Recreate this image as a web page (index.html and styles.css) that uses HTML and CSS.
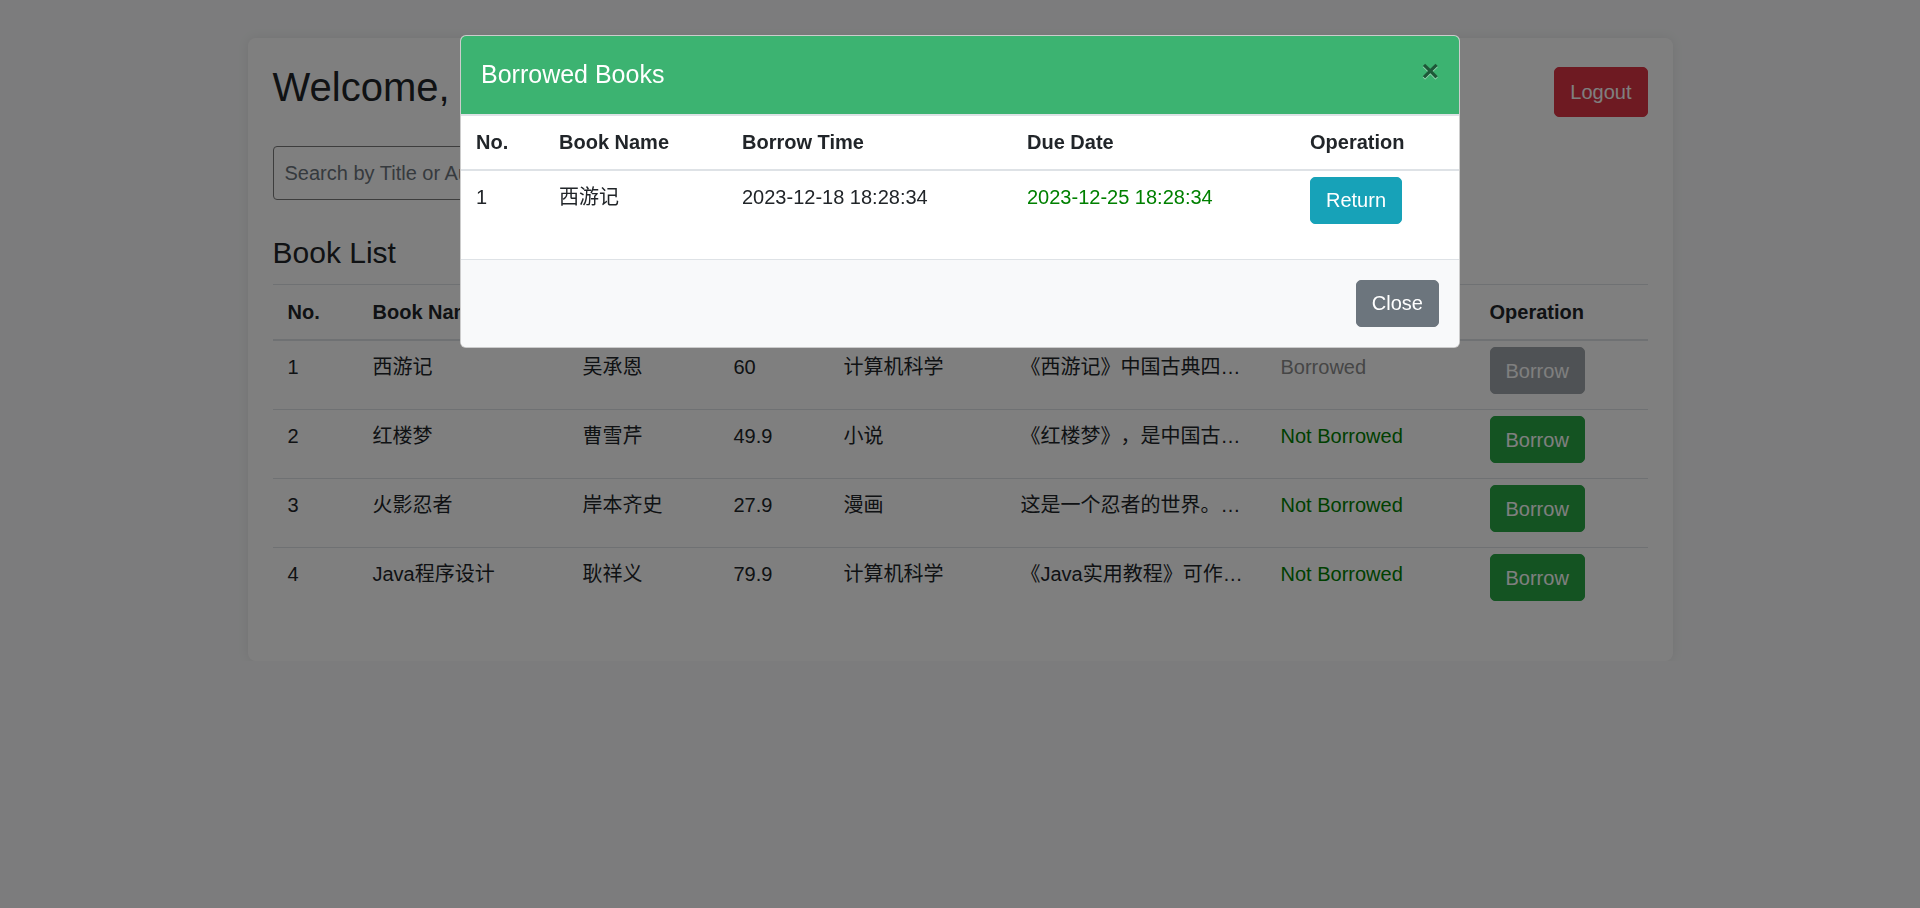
FILE: index.html
```html
<!DOCTYPE html>
<html lang="zh-CN">
<head>
<meta charset="utf-8">
<title>Library</title>
<link rel="stylesheet" href="styles.css">
</head>
<body>
<div class="container">
  <div class="top-bar">
    <h2 class="welcome">Welcome, admin</h2>
    <button class="btn btn-danger btn-logout">Logout</button>
  </div>
  <div class="search-row">
    <input class="search-input" type="text" placeholder="Search by Title or Author">
    <button class="btn btn-primary">Search</button>
  </div>
  <h4 class="list-title">Book List</h4>
  <table class="table book-table">
    <colgroup>
      <col class="c-no"><col class="c-name"><col class="c-author"><col class="c-price"><col class="c-cat"><col class="c-desc"><col class="c-status"><col class="c-op">
    </colgroup>
    <thead>
      <tr><th>No.</th><th>Book Name</th><th>Author</th><th>Price</th><th>Category</th><th>Description</th><th>Status</th><th>Operation</th></tr>
    </thead>
    <tbody>
      <tr>
        <td>1</td><td>西游记</td><td>吴承恩</td><td>60</td><td>计算机科学</td>
        <td><span class="desc-text">《西游记》中国古典四大名著之一，是由明代小说家吴承恩所著。</span></td>
        <td class="status-borrowed">Borrowed</td>
        <td class="op"><button class="btn btn-secondary" disabled>Borrow</button></td>
      </tr>
      <tr>
        <td>2</td><td>红楼梦</td><td>曹雪芹</td><td>49.9</td><td>小说</td>
        <td><span class="desc-text">《红楼梦》，是中国古代章回体长篇小说，中国古典四大名著之一。</span></td>
        <td class="status-free">Not Borrowed</td>
        <td class="op"><button class="btn btn-success">Borrow</button></td>
      </tr>
      <tr>
        <td>3</td><td>火影忍者</td><td>岸本齐史</td><td>27.9</td><td>漫画</td>
        <td><span class="desc-text">这是一个忍者的世界。漩涡鸣人是木叶隐村的忍者。</span></td>
        <td class="status-free">Not Borrowed</td>
        <td class="op"><button class="btn btn-success">Borrow</button></td>
      </tr>
      <tr>
        <td>4</td><td>Java程序设计</td><td>耿祥义</td><td>79.9</td><td>计算机科学</td>
        <td><span class="desc-text">《Java实用教程》可作为高等院校计算机相关专业的教材。</span></td>
        <td class="status-free">Not Borrowed</td>
        <td class="op"><button class="btn btn-success">Borrow</button></td>
      </tr>
    </tbody>
  </table>
</div>

<div class="backdrop"></div>
<div class="modal">
  <div class="modal-dialog">
    <div class="modal-content">
      <div class="modal-header">
        <h5 class="modal-title">Borrowed Books</h5>
        <button class="close-x" type="button" aria-label="Close">&times;</button>
      </div>
      <div class="modal-body">
        <table class="table modal-table">
          <colgroup>
            <col class="m-no"><col class="m-name"><col class="m-time"><col class="m-due"><col class="m-op">
          </colgroup>
          <thead>
            <tr><th>No.</th><th>Book Name</th><th>Borrow Time</th><th>Due Date</th><th>Operation</th></tr>
          </thead>
          <tbody>
            <tr>
              <td>1</td><td>西游记</td><td>2023-12-18 18:28:34</td>
              <td class="due-ok">2023-12-25 18:28:34</td>
              <td class="op"><button class="btn btn-info">Return</button></td>
            </tr>
          </tbody>
        </table>
      </div>
      <div class="modal-footer">
        <button class="btn btn-secondary">Close</button>
      </div>
    </div>
  </div>
</div>
</body>
</html>
```

FILE: styles.css
```css
* { box-sizing: border-box; }

body {
  margin: 0;
  background: #f8f9fa;
  font-family: "Liberation Sans", "Noto Sans CJK SC", sans-serif;
  font-size: 20px;
  line-height: 1.5;
  color: #212529;
  text-spacing-trim: space-all;
}

.container {
  width: 1425px;
  margin: 38px auto 0;
  padding: 25px;
  background: #fff;
  border-radius: 8px;
  box-shadow: 0 0 12px rgba(0, 0, 0, 0.08);
}

.top-bar {
  display: flex;
  justify-content: space-between;
  align-items: center;
  margin-bottom: 25px;
}

.welcome {
  margin: 0 0 10px;
  font-size: 40px;
  font-weight: 500;
  line-height: 1.2;
}

.search-row {
  display: flex;
  gap: 10px;
  margin-bottom: 35px;
}

.search-input {
  width: 700px;
  height: 54px;
  padding: 0 11px;
  font: inherit;
  font-size: 20px;
  color: #495057;
  border: 1px solid #7a7a7a;
  border-radius: 4px;
  background: #fff;
}

.search-input::placeholder { color: #6c757d; }

.list-title {
  margin: 0 0 13px;
  font-size: 30px;
  font-weight: 500;
  line-height: 1.2;
}

/* tables */
.table {
  width: 100%;
  border-collapse: separate;
  border-spacing: 0;
  table-layout: fixed;
  margin-bottom: 20px;
}

.table th,
.table td {
  text-align: left;
  vertical-align: top;
  padding: 11px 15px;
  border-top: 1px solid #dee2e6;
  font-weight: normal;
}

.table thead th {
  padding: 12px 15px;
  border-bottom: 2px solid #dee2e6;
  font-weight: bold;
}

.modal-table thead th { padding: 11px 15px 12px; }

.table tbody tr:first-child td { border-top: 0; }

.table td.op { padding: 6px 15px 15px; }

.c-no { width: 85px; }
.c-name { width: 210px; }
.c-author { width: 151px; }
.c-price { width: 110px; }
.c-cat { width: 177px; }
.c-desc { width: 260px; }
.c-status { width: 209px; }
.c-op { width: 173px; }

.m-no { width: 83px; }
.m-name { width: 183px; }
.m-time { width: 285px; }
.m-due { width: 283px; }

.desc-text {
  display: block;
  width: 230px;
  overflow: hidden;
  white-space: nowrap;
  text-overflow: ellipsis;
}

.status-borrowed { color: #8c8c8c; }
.status-free { color: #008000; }
.due-ok { color: #008000; }

/* buttons */
.btn {
  display: inline-block;
  vertical-align: top;
  font-family: inherit;
  font-size: 20px;
  line-height: 30px;
  padding: 7.5px 15px;
  border: 1px solid transparent;
  border-radius: 5px;
  color: #fff;
  cursor: pointer;
}

.btn-logout { padding: 9px 15px; }
.btn-danger { background: #dc3545; border-color: #dc3545; }
.btn-primary { background: #007bff; border-color: #007bff; }
.btn-success { background: #28a745; border-color: #28a745; }
.btn-info { background: #17a2b8; border-color: #17a2b8; }
.btn-secondary { background: #6c757d; border-color: #6c757d; }
.btn:disabled { opacity: 0.65; cursor: default; }

/* modal */
.backdrop {
  position: fixed;
  inset: 0;
  background: rgba(0, 0, 0, 0.5);
  z-index: 10;
}

.modal {
  position: fixed;
  inset: 0;
  z-index: 20;
  overflow: auto;
}

.modal-dialog {
  width: 1000px;
  margin: 35px auto;
}

.modal-content {
  background: #fff;
  border: 1px solid rgba(0, 0, 0, 0.2);
  border-radius: 6px;
  overflow: hidden;
}

.modal-header {
  display: flex;
  align-items: flex-start;
  justify-content: space-between;
  padding: 20px;
  background: #3cb371;
  color: #fff;
  border-bottom: 1px solid #dee2e6;
}

.modal-title {
  margin: 0;
  font-size: 25px;
  font-weight: 500;
  line-height: 1.5;
}

.close-x {
  padding: 20px;
  margin: -20px -20px -20px auto;
  background: transparent;
  border: 0;
  font-family: "Liberation Sans", sans-serif;
  font-size: 30px;
  font-weight: bold;
  line-height: 1;
  color: #000;
  opacity: 0.5;
  text-shadow: 0 1px 0 #fff;
  cursor: pointer;
}

.modal-body { padding: 0; }

.modal-footer {
  display: flex;
  justify-content: flex-end;
  align-items: center;
  padding: 15px;
  background: #f8f9fa;
  border-top: 1px solid #dee2e6;
}

.modal-footer .btn { margin: 5px; }
```
